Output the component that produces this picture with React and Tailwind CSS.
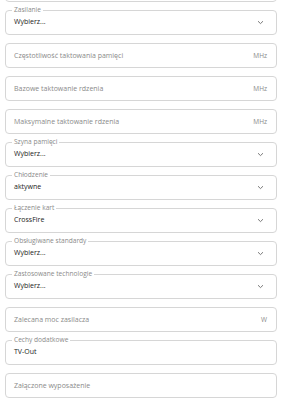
import React from "react";

const fields = [
  { type: "select", label: "", value: "" },
  { type: "select", label: "Zasilanie", value: "Wybierz..." },
  { type: "input", placeholder: "Częstotliwość taktowania pamięci", unit: "MHz" },
  { type: "input", placeholder: "Bazowe taktowanie rdzenia", unit: "MHz" },
  { type: "input", placeholder: "Maksymalne taktowanie rdzenia", unit: "MHz" },
  { type: "select", label: "Szyna pamięci", value: "Wybierz..." },
  { type: "select", label: "Chłodzenie", value: "aktywne" },
  { type: "select", label: "Łączenie kart", value: "CrossFire" },
  { type: "select", label: "Obsługiwane standardy", value: "Wybierz..." },
  { type: "select", label: "Zastosowane technologie", value: "Wybierz..." },
  { type: "input", placeholder: "Zalecana moc zasilacza", unit: "W" },
  { type: "text", label: "Cechy dodatkowe", value: "TV-Out" },
  { type: "input", placeholder: "Załączone wyposażenie", unit: "" },
];

const Chevron = () => (
  <svg width="7" height="5" viewBox="0 0 7 5" fill="none" className="text-[#6b6b6b]">
    <path d="M1 1.2 L3.5 3.6 L6 1.2" stroke="currentColor" strokeWidth="0.9" />
  </svg>
);

const Field = ({ field }) => {
  return (
    <div className="relative h-[25px] w-[272px] rounded-[4px] border border-[#d6d6d6] bg-white flex items-center pl-[8px] pr-[9px]">
      {field.label && (
        <span className="absolute -top-[5px] left-[6px] bg-white px-[2px] text-[6.6px] leading-[8px] text-[#8a8a8a]">
          {field.label}
        </span>
      )}
      {field.type === "input" ? (
        <span className="flex-1 text-[7px] text-[#8a8a8a] pt-[2px]">{field.placeholder}</span>
      ) : (
        <span className="flex-1 text-[7px] text-[#222222]">{field.value}</span>
      )}
      {field.type === "input" && field.unit && <span className="text-[6.5px] text-[#8a8a8a]">{field.unit}</span>}
      {field.type === "select" && (
        <span className="mr-[3px] flex items-center">
          <Chevron />
        </span>
      )}
    </div>
  );
};

const App = () => {
  return (
    <div className="h-[399px] w-[288px] overflow-hidden bg-white" style={{ fontFamily: "'Open Sans', 'Liberation Sans', sans-serif" }}>
      <div className="flex flex-col gap-[8px] pl-[5px] -mt-[23px]">
        {fields.map((f, i) => (
          <Field key={i} field={f} />
        ))}
      </div>
    </div>
  );
};

export default App;
